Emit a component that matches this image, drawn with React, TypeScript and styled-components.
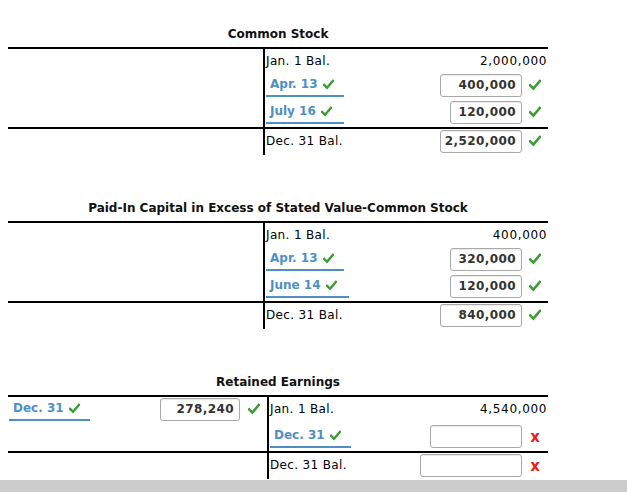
import React from 'react';
import styled, { createGlobalStyle } from 'styled-components';

const Global = createGlobalStyle`
  html, body { margin: 0; padding: 0; background: #fff; }
  body {
    font-family: "DejaVu Sans", Verdana, sans-serif;
    font-size: 12px;
    color: #000;
  }
`;

const Page = styled.div`
  padding-top: 26px;
  display: flex;
  flex-direction: column;
`;

const Account = styled.section`
  width: 540px;
  margin-left: 8px;
  & + & { margin-top: 45px; }
`;

const Title = styled.div`
  text-align: center;
  font-weight: bold;
  line-height: 16px;
  height: 16px;
  margin-bottom: 5px;
  color: #111;
`;

const Half = styled.div<{ $left: number }>`
  display: grid;
  grid-template-columns: ${(p) => p.$left}px 1fr;
  border-top: 2px solid #000;
`;

const Col = styled.div<{ $right?: boolean }>`
  display: flex;
  flex-direction: column;
  ${(p) => (p.$right ? 'border-left: 2px solid #000;' : '')}
`;

const Row = styled.div<{ $h: number }>`
  height: ${(p) => p.$h}px;
  display: flex;
  align-items: flex-start;
  justify-content: space-between;
`;

const Plain = styled.span`
  line-height: 24px;
  padding-left: 1px;
  letter-spacing: 0.35px;
`;

const Amount = styled.span`
  line-height: 24px;
  padding-right: 1px;
  letter-spacing: 0.65px;
`;

const DateLabel = styled.span<{ $w: number }>`
  display: inline-flex;
  align-items: center;
  gap: 5px;
  box-sizing: border-box;
  width: ${(p) => p.$w}px;
  height: 24px;
  margin-left: 1px;
  padding-left: 4px;
  border-bottom: 2px solid #4f8fc6;
  color: #4f8fc6;
  font-weight: bold;
`;

const Entry = styled.span`
  display: flex;
  align-items: flex-start;
`;

const Box = styled.div<{ $w: number }>`
  box-sizing: border-box;
  width: ${(p) => p.$w}px;
  height: 23px;
  margin-top: 1px;
  border: 1px solid #a9a9a9;
  border-radius: 3px;
  background: #fff;
  box-shadow: inset 0 1px 1px rgba(0, 0, 0, 0.08);
  text-align: right;
  padding-right: 5px;
  line-height: 21px;
  font-weight: bold;
  letter-spacing: 0.4px;
  color: #333;
`;

const Mark = styled.span<{ $w?: number }>`
  width: ${(p) => p.$w ?? 26}px;
  height: 24px;
  display: flex;
  align-items: center;
  justify-content: center;
`;

const Cross = styled.span`
  color: #e8211b;
  font-weight: bold;
  font-size: 15px;
  line-height: 24px;
  margin-top: 1px;
`;

const Bar = styled.div`
  height: 14px;
  margin-top: 1px;
  background: #cccccc;
`;

const Check = ({ size = 12 }: { size?: number }) => (
  <svg width={size} height={size} viewBox="0 0 12 12" aria-hidden>
    <path d="M1.2 6.4 L4.4 9.6 L10.8 2" fill="none" stroke="#3d9b35" strokeWidth="2.6" strokeLinecap="square" />
  </svg>
);

type Ok = boolean | undefined;

const Date = ({ text, w }: { text: string; w: number }) => (
  <DateLabel $w={w}>
    {text}
    <Check size={11} />
  </DateLabel>
);

const Input = ({ value, w, ok, slot }: { value: string; w: number; ok: Ok; slot?: number }) => (
  <Entry>
    <Box $w={w}>{value}</Box>
    <Mark $w={slot}>{ok ? <Check /> : <Cross>x</Cross>}</Mark>
  </Entry>
);

export default function App() {
  return (
    <>
      <Global />
      <Page>
        <Account>
          <Title>Common Stock</Title>
          <Half $left={255}>
            <Col />
            <Col $right>
              <Row $h={24}>
                <Plain>Jan. 1 Bal.</Plain>
                <Amount>2,000,000</Amount>
              </Row>
              <Row $h={27}>
                <Date text="Apr. 13" w={78} />
                <Input value="400,000" w={82} ok />
              </Row>
              <Row $h={27}>
                <Date text="July 16" w={78} />
                <Input value="120,000" w={72} ok />
              </Row>
            </Col>
          </Half>
          <Half $left={255}>
            <Col />
            <Col $right>
              <Row $h={26}>
                <Plain>Dec. 31 Bal.</Plain>
                <Input value="2,520,000" w={82} ok />
              </Row>
            </Col>
          </Half>
        </Account>

        <Account>
          <Title>Paid-In Capital in Excess of Stated Value-Common Stock</Title>
          <Half $left={255}>
            <Col />
            <Col $right>
              <Row $h={24}>
                <Plain>Jan. 1 Bal.</Plain>
                <Amount>400,000</Amount>
              </Row>
              <Row $h={27}>
                <Date text="Apr. 13" w={78} />
                <Input value="320,000" w={72} ok />
              </Row>
              <Row $h={27}>
                <Date text="June 14" w={83} />
                <Input value="120,000" w={72} ok />
              </Row>
            </Col>
          </Half>
          <Half $left={255}>
            <Col />
            <Col $right>
              <Row $h={26}>
                <Plain>Dec. 31 Bal.</Plain>
                <Input value="840,000" w={82} ok />
              </Row>
            </Col>
          </Half>
        </Account>

        <Account>
          <Title>Retained Earnings</Title>
          <Half $left={259}>
            <Col>
              <Row $h={27}>
                <Date text="Dec. 31" w={81} />
                <Input value="278,240" w={80} ok slot={27} />
              </Row>
            </Col>
            <Col $right>
              <Row $h={27}>
                <Plain>Jan. 1 Bal.</Plain>
                <Amount>4,540,000</Amount>
              </Row>
              <Row $h={27}>
                <Date text="Dec. 31" w={81} />
                <Input value="" w={92} ok={false} />
              </Row>
            </Col>
          </Half>
          <Half $left={259}>
            <Col />
            <Col $right>
              <Row $h={26}>
                <Plain>Dec. 31 Bal.</Plain>
                <Input value="" w={102} ok={false} />
              </Row>
            </Col>
          </Half>
        </Account>
        <Bar />
      </Page>
    </>
  );
}
